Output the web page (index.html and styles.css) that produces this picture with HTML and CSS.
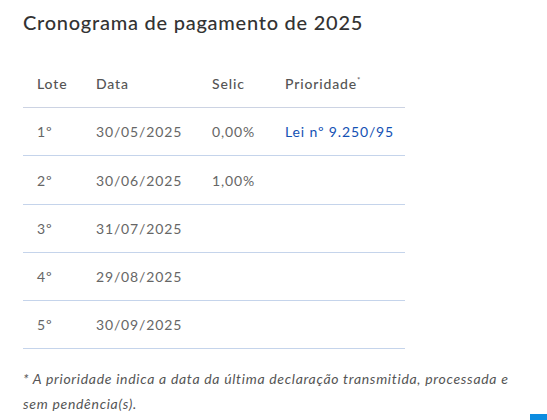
FILE: index.html
```html
<!DOCTYPE html>
<html lang="pt-BR">
<head>
<meta charset="utf-8">
<link rel="stylesheet" href="styles.css">
</head>
<body>
<main class="content">
  <h2 class="title">Cronograma de pagamento de 2025</h2>
  <table class="schedule">
    <colgroup>
      <col class="c-lote"><col class="c-data"><col class="c-selic"><col class="c-prio">
    </colgroup>
    <thead>
      <tr><th>Lote</th><th>Data</th><th>Selic</th><th>Prioridade<sup>*</sup></th></tr>
    </thead>
    <tbody>
      <tr><td>1º</td><td>30/05/2025</td><td>0,00%</td><td><a class="link" href="#">Lei nº 9.250/95</a></td></tr>
      <tr class="tall"><td>2º</td><td>30/06/2025</td><td>1,00%</td><td></td></tr>
      <tr><td>3º</td><td>31/07/2025</td><td></td><td></td></tr>
      <tr><td>4º</td><td>29/08/2025</td><td></td><td></td></tr>
      <tr><td>5º</td><td>30/09/2025</td><td></td><td></td></tr>
    </tbody>
  </table>
  <p class="note">* A prioridade indica a data da última declaração transmitida, processada e sem pendência(s).</p>
</main>
<div class="totop"></div>
</body>
</html>
```
FILE: styles.css
```css
html, body {
  margin: 0;
  background: #fff;
}
body {
  font-family: "Lato", "Open Sans", sans-serif;
  color: #555;
  width: 547px;
  height: 420px;
  overflow: hidden;
  position: relative;
}
.content {
  padding: 0 23px;
}
.title {
  margin: 0;
  padding-top: 9px;
  font-size: 20px;
  line-height: 26px;
  font-weight: 500;
  letter-spacing: 0.75px;
  color: #333;
}
.schedule {
  margin-top: 25px;
  border-collapse: collapse;
  width: 382px;
  table-layout: fixed;
  font-size: 14px;
  letter-spacing: 0.85px;
}
.c-lote { width: 59px; }
.c-data { width: 116px; }
.c-selic { width: 73px; }
.c-prio { width: 134px; }
.schedule th,
.schedule td {
  height: 47px;
  padding: 0 0 0 14px;
  text-align: left;
  vertical-align: middle;
  border-bottom: 1px solid #c5d4eb;
}
.schedule tr.tall td {
  height: 48px;
}
.schedule th {
  font-weight: 500;
  color: #555;
  border-bottom-color: #ccd3e3;
}
.schedule td {
  color: #666;
}
.schedule sup {
  font-size: 8px;
  vertical-align: 6px;
}
.link {
  color: #1351b4;
  text-decoration: none;
}
.note {
  margin: 17px 0 0;
  font-size: 14px;
  line-height: 25px;
  font-style: italic;
  letter-spacing: 0.7px;
  color: #555;
}
.totop {
  position: absolute;
  left: 530px;
  top: 414px;
  width: 20px;
  height: 10px;
  background: #0c8ce0;
}
```
